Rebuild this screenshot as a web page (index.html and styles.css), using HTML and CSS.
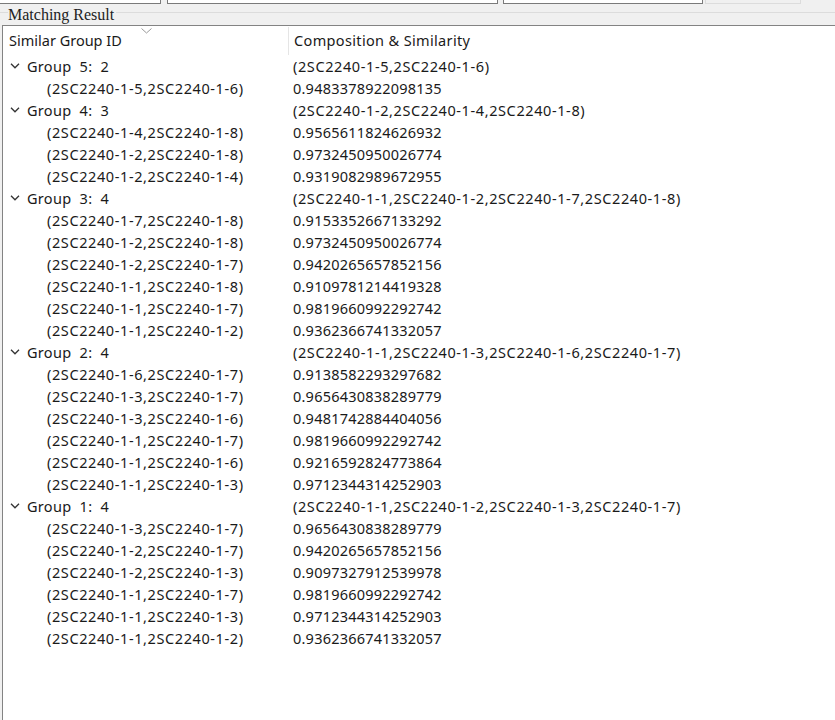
FILE: index.html
```html
<!DOCTYPE html>
<html lang="en">

<head>
    <meta charset="UTF-8" />
    <title>Matching Result</title>
    <link rel="stylesheet" href="styles.css">
</head>

<body>
    <div class="toolbar">
        <div class="field field-a"></div>
        <div class="field field-b"></div>
        <div class="field field-c"></div>
        <div class="field field-d"></div>
    </div>
    <div class="group-title"><span>Matching Result</span></div>

    <div class="panel">
        <div class="head">
            <div class="head-cell first">Similar Group ID
                <svg class="sort" width="11" height="6" viewBox="0 0 11 6"><path d="M0.5 0.5 L5.5 5 L10.5 0.5" fill="none" stroke="#9a9a9a" stroke-width="1" /></svg>
            </div>
            <div class="head-cell">Composition &amp; Similarity</div>
        </div>
        <div class="rows" id="rows"></div>
    </div>

    <script>
        // groups: [title, composition, [[pair, similarity], ...]]
        const GROUPS = [
            ["Group  5:  2", "(2SC2240-1-5,2SC2240-1-6)", [
                ["(2SC2240-1-5,2SC2240-1-6)", "0.9483378922098135"]]],
            ["Group  4:  3", "(2SC2240-1-2,2SC2240-1-4,2SC2240-1-8)", [
                ["(2SC2240-1-4,2SC2240-1-8)", "0.9565611824626932"],
                ["(2SC2240-1-2,2SC2240-1-8)", "0.9732450950026774"],
                ["(2SC2240-1-2,2SC2240-1-4)", "0.9319082989672955"]]],
            ["Group  3:  4", "(2SC2240-1-1,2SC2240-1-2,2SC2240-1-7,2SC2240-1-8)", [
                ["(2SC2240-1-7,2SC2240-1-8)", "0.9153352667133292"],
                ["(2SC2240-1-2,2SC2240-1-8)", "0.9732450950026774"],
                ["(2SC2240-1-2,2SC2240-1-7)", "0.9420265657852156"],
                ["(2SC2240-1-1,2SC2240-1-8)", "0.9109781214419328"],
                ["(2SC2240-1-1,2SC2240-1-7)", "0.9819660992292742"],
                ["(2SC2240-1-1,2SC2240-1-2)", "0.9362366741332057"]]],
            ["Group  2:  4", "(2SC2240-1-1,2SC2240-1-3,2SC2240-1-6,2SC2240-1-7)", [
                ["(2SC2240-1-6,2SC2240-1-7)", "0.9138582293297682"],
                ["(2SC2240-1-3,2SC2240-1-7)", "0.9656430838289779"],
                ["(2SC2240-1-3,2SC2240-1-6)", "0.9481742884404056"],
                ["(2SC2240-1-1,2SC2240-1-7)", "0.9819660992292742"],
                ["(2SC2240-1-1,2SC2240-1-6)", "0.9216592824773864"],
                ["(2SC2240-1-1,2SC2240-1-3)", "0.9712344314252903"]]],
            ["Group  1:  4", "(2SC2240-1-1,2SC2240-1-2,2SC2240-1-3,2SC2240-1-7)", [
                ["(2SC2240-1-3,2SC2240-1-7)", "0.9656430838289779"],
                ["(2SC2240-1-2,2SC2240-1-7)", "0.9420265657852156"],
                ["(2SC2240-1-2,2SC2240-1-3)", "0.9097327912539978"],
                ["(2SC2240-1-1,2SC2240-1-7)", "0.9819660992292742"],
                ["(2SC2240-1-1,2SC2240-1-3)", "0.9712344314252903"],
                ["(2SC2240-1-1,2SC2240-1-2)", "0.9362366741332057"]]]
        ];

        const CHEVRON = '<svg class="chev" width="10" height="6" viewBox="0 0 10 6"><path d="M1 0.8 L5 4.8 L9 0.8" fill="none" stroke="#333" stroke-width="1.3" /></svg>';

        let html = '';
        GROUPS.forEach(function (g) {
            html += '<div class="row group"><div class="cell first">' + CHEVRON +
                '<span class="title">' + g[0] + '</span></div><div class="cell ids">' + g[1] + '</div></div>';
            g[2].forEach(function (c) {
                html += '<div class="row child"><div class="cell first ids">' + c[0] +
                    '</div><div class="cell num">' + c[1] + '</div></div>';
            });
        });
        document.getElementById('rows').innerHTML = html;
    </script>
</body>

</html>
```

FILE: styles.css
```css
body {
    margin: 0;
    height: 720px;
    overflow: hidden;
    background: #f0f0f0;
    font-family: "Noto Sans", sans-serif;
    display: flex;
    flex-direction: column;
}

.toolbar {
    height: 6px;
    display: flex;
    position: relative;
}

.field {
    height: 3px;
    background: #fff;
    border: 1px solid #7a7a7a;
    border-top: none;
}

.field-a {
    width: 160px;
    border-left: none;
}

.field-b {
    margin-left: 6px;
    width: 329px;
}

.field-c {
    margin-left: 5px;
    width: 198px;
}

.field-d {
    margin-left: 2px;
    width: 94px;
    background: #f0f0f0;
    border-color: #dcdcdc;
}

.group-title {
    height: 19px;
    position: relative;
    font-family: "Liberation Serif", serif;
    font-size: 16px;
    color: #222;
}

.group-title::before {
    content: "";
    position: absolute;
    left: 0;
    right: 0;
    top: 6px;
    border-top: 1px solid #dcdcdc;
}

.group-title span {
    position: relative;
    display: inline-block;
    margin-left: 8px;
    padding-right: 2px;
    line-height: 16px;
    margin-top: -2px;
    background: #f0f0f0;
}

.panel {
    flex: 1;
    margin-left: 2px;
    background: #fff;
    border-top: 1px solid #838383;
    border-left: 1px solid #838383;
}

.head {
    display: grid;
    grid-template-columns: 286px 1fr;
    height: 29px;
    font-size: 14.5px;
    color: #1a1a1a;
}

.head-cell {
    position: relative;
    padding-left: 6px;
    line-height: 28px;
}

.head-cell.first {
    border-right: 1px solid #e5e5e5;
    margin-top: 1px;
    line-height: 27px;
}

.head-cell + .head-cell {
    padding-left: 5px;
    letter-spacing: 0.35px;
}

.sort {
    position: absolute;
    left: 138px;
    top: 1px;
}

.row {
    display: grid;
    grid-template-columns: 287px 1fr;
    height: 22px;
    line-height: 22px;
    font-size: 14.5px;
    color: #1a1a1a;
}

.cell {
    white-space: nowrap;
}

.ids {
    letter-spacing: 0.6px;
}

.num {
    letter-spacing: 0.22px;
}

.row .cell + .cell {
    padding-left: 3px;
}

.group .cell.first {
    display: flex;
    align-items: center;
    padding-left: 7px;
}

.title {
    white-space: pre;
    letter-spacing: 0.3px;
}

.chev {
    margin-right: 7px;
}

.child .cell.first {
    padding-left: 44px;
}
```
